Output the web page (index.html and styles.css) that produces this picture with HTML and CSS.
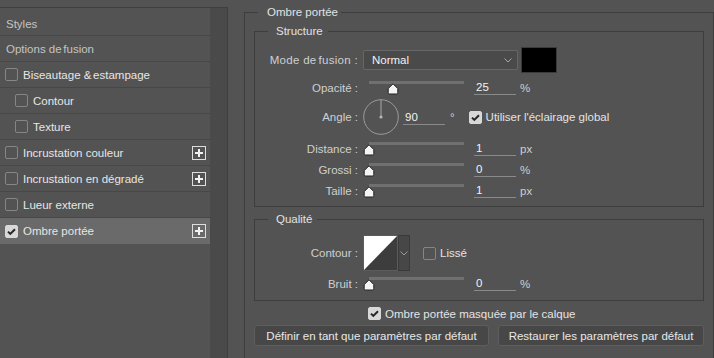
FILE: index.html
```html
<!DOCTYPE html>
<html lang="fr">
<head>
  <meta charset="UTF-8" />
  <title>Style de calque</title>
  <link rel="stylesheet" href="styles.css">
</head>
<body>
  <div class="dialog">

    <aside class="sidebar">
      <ul class="style-list">
        <li class="item heading first">Styles</li>
        <li class="item heading">Options&nbsp;<span class="tight">de fusion</span></li>
        <li class="item"><span class="check"></span>Biseautage&nbsp;<span class="tight">&amp; estampage</span></li>
        <li class="item sub"><span class="check"></span>Contour</li>
        <li class="item sub"><span class="check"></span>Texture</li>
        <li class="item"><span class="check"></span>Incrustation couleur
          <svg class="plus" width="14" height="14" viewBox="0 0 14 14"><rect x=".5" y=".5" width="13" height="13" fill="none" stroke="#dedede"/><path d="M7 3v8M3 7h8" stroke="#f2f2f2" stroke-width="2"/></svg>
        </li>
        <li class="item"><span class="check"></span>Incrustation en dégradé
          <svg class="plus" width="14" height="14" viewBox="0 0 14 14"><rect x=".5" y=".5" width="13" height="13" fill="none" stroke="#dedede"/><path d="M7 3v8M3 7h8" stroke="#f2f2f2" stroke-width="2"/></svg>
        </li>
        <li class="item"><span class="check"></span>Lueur externe</li>
        <li class="item active"><span class="check on"><svg width="11" height="11" viewBox="0 0 11 11"><path d="M2 5.6l2.3 2.3L9 3.2" fill="none" stroke="#262626" stroke-width="2"/></svg></span>Ombre portée
          <svg class="plus" width="14" height="14" viewBox="0 0 14 14"><rect x=".5" y=".5" width="13" height="13" fill="none" stroke="#dedede"/><path d="M7 3v8M3 7h8" stroke="#f2f2f2" stroke-width="2"/></svg>
        </li>
      </ul>
      <div class="scrollbar"></div>
    </aside>

    <main class="panel">
      <fieldset class="group outer">
        <legend>Ombre portée</legend>

        <fieldset class="group structure">
          <legend>Structure</legend>

          <div class="row mode-row">
            <span class="lbl spaced">Mode&nbsp;<span class="tight">de fusion</span>&nbsp;:</span>
            <div class="select">
              <span>Normal</span>
              <svg width="8" height="5" viewBox="0 0 8 5"><path d="M.5 .5l3.5 3.5 3.5-3.5" fill="none" stroke="#a8a8a8"/></svg>
            </div>
            <div class="swatch"></div>
          </div>

          <div class="row slider-row opacity">
            <span class="lbl">Opacité :</span>
            <div class="slider">
              <div class="track"></div>
              <svg class="thumb" style="left: 24px" width="12" height="12" viewBox="0 0 12 12"><path d="M6 .8L10.8 5.6V9.6Q10.8 11 9.4 11H2.6Q1.2 11 1.2 9.6V5.6Z" fill="#f4f4f4" stroke="#222"/></svg>
            </div>
            <span class="value">25</span>
            <span class="unit">%</span>
          </div>

          <div class="row angle-row">
            <span class="lbl">Angle :</span>
            <svg class="dial" width="36" height="36" viewBox="0 0 36 36"><circle cx="18" cy="18" r="17.3" fill="none" stroke="#9c9c9c"/><path d="M18 18V1" stroke="#a8a8a8"/><circle cx="18" cy="18" r="1.6" fill="#b8b8b8"/></svg>
            <span class="value">90</span>
            <span class="deg">°</span>
            <label class="opt"><span class="check on"><svg width="11" height="11" viewBox="0 0 11 11"><path d="M2 5.6l2.3 2.3L9 3.2" fill="none" stroke="#262626" stroke-width="2"/></svg></span>Utiliser l'éclairage global</label>
          </div>

          <div class="row slider-row distance">
            <span class="lbl">Distance :</span>
            <div class="slider">
              <div class="track"></div>
              <svg class="thumb" style="left: 0px" width="12" height="12" viewBox="0 0 12 12"><path d="M6 .8L10.8 5.6V9.6Q10.8 11 9.4 11H2.6Q1.2 11 1.2 9.6V5.6Z" fill="#f4f4f4" stroke="#222"/></svg>
            </div>
            <span class="value">1</span>
            <span class="unit">px</span>
          </div>

          <div class="row slider-row">
            <span class="lbl">Grossi :</span>
            <div class="slider">
              <div class="track"></div>
              <svg class="thumb" style="left: 0px" width="12" height="12" viewBox="0 0 12 12"><path d="M6 .8L10.8 5.6V9.6Q10.8 11 9.4 11H2.6Q1.2 11 1.2 9.6V5.6Z" fill="#f4f4f4" stroke="#222"/></svg>
            </div>
            <span class="value">0</span>
            <span class="unit">%</span>
          </div>

          <div class="row slider-row">
            <span class="lbl">Taille :</span>
            <div class="slider">
              <div class="track"></div>
              <svg class="thumb" style="left: 0px" width="12" height="12" viewBox="0 0 12 12"><path d="M6 .8L10.8 5.6V9.6Q10.8 11 9.4 11H2.6Q1.2 11 1.2 9.6V5.6Z" fill="#f4f4f4" stroke="#222"/></svg>
            </div>
            <span class="value">1</span>
            <span class="unit">px</span>
          </div>
        </fieldset>

        <fieldset class="group quality">
          <legend>Qualité</legend>

          <div class="row contour-row">
            <span class="lbl">Contour :</span>
            <div class="curve">
              <svg class="curve-preview" width="35" height="36" viewBox="0 0 35 36"><rect width="35" height="36" fill="#3d3d3d"/><path d="M0 0H35L0 36Z" fill="#fff"/><rect x=".5" y=".5" width="34" height="35" fill="none" stroke="#5c5c5c"/></svg>
              <div class="curve-arrow">
                <svg width="8" height="5" viewBox="0 0 8 5"><path d="M.5 .5l3.5 3.5 3.5-3.5" fill="none" stroke="#9a9a9a"/></svg>
              </div>
            </div>
            <label class="opt smooth"><span class="check"></span>Lissé</label>
          </div>

          <div class="row slider-row noise">
            <span class="lbl">Bruit :</span>
            <div class="slider">
              <div class="track"></div>
              <svg class="thumb" style="left: 0px" width="12" height="12" viewBox="0 0 12 12"><path d="M6 .8L10.8 5.6V9.6Q10.8 11 9.4 11H2.6Q1.2 11 1.2 9.6V5.6Z" fill="#f4f4f4" stroke="#222"/></svg>
            </div>
            <span class="value">0</span>
            <span class="unit">%</span>
          </div>
        </fieldset>

        <label class="opt mask-row"><span class="check on"><svg width="11" height="11" viewBox="0 0 11 11"><path d="M2 5.6l2.3 2.3L9 3.2" fill="none" stroke="#262626" stroke-width="2"/></svg></span>Ombre portée masquée par le calque</label>

        <div class="actions">
          <button class="btn">Définir en tant que paramètres par défaut</button>
          <button class="btn">Restaurer les paramètres par défaut</button>
        </div>
      </fieldset>
    </main>

  </div>
</body>
</html>
```

FILE: styles.css
```css
* {
  box-sizing: border-box;
}

body {
  margin: 0;
  background: #535353;
  font-family: "Liberation Sans", Arial, sans-serif;
  font-size: 11.5px;
  color: #d4d4d4;
}

.dialog {
  display: flex;
  height: 358px;
  overflow: hidden;
}

/* left list of styles */
.sidebar {
  flex: none;
  width: 228px;
  margin-top: 7px;
  border-top: 1px solid #3e3e3e;
  border-right: 1px solid #3e3e3e;
  display: flex;
}

.style-list {
  list-style: none;
  margin: 0;
  padding: 0;
  width: 210px;
}

.item {
  display: flex;
  align-items: center;
  height: 26px;
  padding-left: 5px;
  border-bottom: 1px solid #474747;
  color: #e6e6e6;
  white-space: nowrap;
}

.item.first {
  height: 28px;
  padding-top: 4px;
}

.item.heading {
  padding-left: 6px;
  color: #c4c4c4;
}

.item.sub {
  padding-left: 15px;
}

.item.active {
  background: #6a6a6a;
  border-bottom: none;
}

.tight {
  word-spacing: -1.5px;
}

.check {
  flex: none;
  width: 13px;
  height: 13px;
  margin-right: 5px;
  border: 1px solid #868686;
  border-radius: 2px;
  display: flex;
  align-items: center;
  justify-content: center;
}

.check.on {
  background: #d8d8d8;
  border-color: #d8d8d8;
}

.plus {
  margin-left: auto;
  margin-right: 4px;
}

.scrollbar {
  flex: 1;
  background: #4a4a4a;
}

/* right settings panel */
.panel {
  flex: 1;
  padding: 5px 0 0 16px;
}

.group {
  margin: 0;
  min-width: 0;
  border: 1px solid #3d3d3d;
  padding: 0 10px 5px;
}

.group legend {
  margin-left: 3px;
  padding: 0 5px 0 8px;
  line-height: 14px;
  color: #e2e2e2;
}

.outer {
  width: 470px;
  height: 420px;
  padding: 0 9px;
}

.outer > legend {
  margin-left: 4px;
  padding: 0 3px 0 9px;
}

.structure {
  margin-top: 5px;
}

.quality {
  margin-top: 5px;
  padding-bottom: 6px;
}

.row {
  display: flex;
  align-items: center;
}

.lbl {
  flex: none;
  width: 93px;
  margin-right: 5px;
  text-align: right;
  color: #cfcfcf;
}

.lbl.spaced {
  letter-spacing: 0.3px;
}

.mode-row {
  height: 26px;
  margin-top: 9px;
}

.select {
  width: 155px;
  height: 20px;
  padding: 0 5px 0 8px;
  display: flex;
  align-items: center;
  justify-content: space-between;
  background: #4a4a4a;
  border: 1px solid #666;
  border-radius: 2px;
  color: #f2f2f2;
}

.swatch {
  width: 36px;
  height: 26px;
  margin-left: 3px;
  background: #000;
  border: 1px solid #3a3a3a;
}

.slider-row {
  height: 21px;
}

.opacity {
  margin-top: 4px;
}

.distance {
  margin-top: 3px;
}

.slider {
  position: relative;
  flex: none;
  width: 106px;
  height: 21px;
  margin-right: 5px;
}

.track {
  width: 95px;
  height: 3px;
  margin: 4px 0 0 6px;
  background: #707070;
}

.thumb {
  position: absolute;
  top: 6px;
}

.value {
  flex: none;
  align-self: flex-start;
  width: 42px;
  height: 18px;
  margin-right: 4px;
  padding: 3px 0 0 2px;
  line-height: 14px;
  border-bottom: 1px solid #8a8a8a;
  color: #f2f2f2;
}

.unit {
  color: #cfcfcf;
}

.angle-row {
  height: 36px;
  margin-top: 1px;
}

.angle-row .value {
  margin: 8px 0 0 4px;
}

.deg {
  margin-left: 5px;
  color: #cfcfcf;
}

.opt {
  display: flex;
  align-items: center;
  margin-left: 14px;
  color: #e4e4e4;
}

.opt .check {
  margin-right: 4px;
}

.contour-row {
  height: 36px;
  margin-top: 9px;
}

.curve {
  display: flex;
  height: 36px;
}

.curve-arrow {
  width: 12px;
  height: 36px;
  display: flex;
  align-items: center;
  justify-content: center;
  background: #474747;
  border: 1px solid #3a3a3a;
}

.smooth {
  margin-left: 13px;
}

.noise {
  margin-top: 2px;
}

.mask-row {
  height: 13px;
  margin: 6px 0 0 114px;
}

.actions {
  display: grid;
  grid-template-columns: 235px 1fr;
  gap: 9px;
  margin-top: 5px;
}

.btn {
  height: 21px;
  padding: 0;
  font: inherit;
  color: #e8e8e8;
  background: #474747;
  border: 1px solid #5e5e5e;
  border-radius: 3px;
}
```
